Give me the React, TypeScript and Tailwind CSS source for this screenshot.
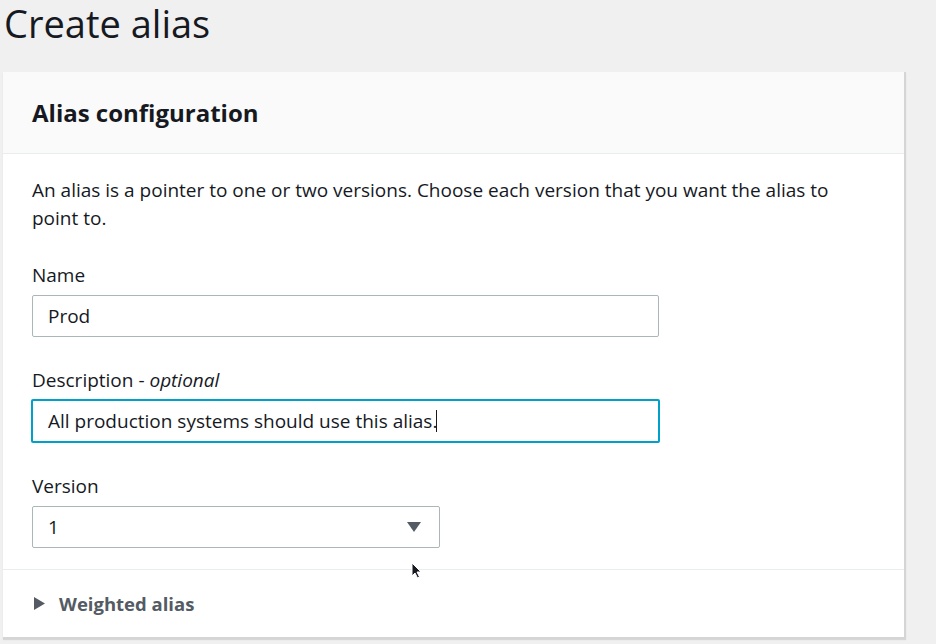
import React from 'react';

const font = { fontFamily: '"Open Sans", "Liberation Sans", sans-serif' };

const Field = ({ label, children }: { label: React.ReactNode; children: React.ReactNode }) => (
  <div className="flex flex-col">
    <label className="text-[19px] leading-[26px] text-[#16191f] mb-[7px]">{label}</label>
    {children}
  </div>
);

export default function App() {
  return (
    <div className="w-[936px] h-[644px] overflow-hidden bg-[#f0f0f0] text-[#16191f]" style={font}>
      <h1 className="pl-[4px] text-[38px] leading-[46px] font-normal text-[#16191f]">Create alias</h1>

      <div className="ml-[3px] mt-[26px] w-[903px] bg-white border-r-2 border-b-2 border-[#d5d5d5] shadow-[0_1px_1px_rgba(0,0,0,0.1)]">
        <div className="h-[82px] bg-[#fafafa] border-b border-[#eaeded] flex items-center px-[29px]">
          <h2 className="text-[24px] font-bold leading-[30px]">Alias configuration</h2>
        </div>

        <div className="px-[29px] pt-[22px] pb-[21px] flex flex-col gap-[30px]">
          <p className="text-[19px] leading-[28px] w-[815px]">
            An alias is a pointer to one or two versions. Choose each version that you want the alias to point to.
          </p>

          <Field label="Name">
            <div className="w-[627px] h-[42px] border border-[#aab7b8] rounded-[2px] flex items-center px-[15px] text-[19px]">
              Prod
            </div>
          </Field>

          <Field label={<>Description - <i>optional</i></>}>
            <div className="-ml-[1px] w-[629px] h-[44px] -mt-[1px] border-2 border-[#00a1c9] rounded-[2px] flex items-center px-[15px] text-[19px]">
              All production systems should use this alias.<span className="inline-block w-px h-[22px] bg-[#16191f] -ml-px" />
            </div>
          </Field>

          <Field label="Version">
            <div className="w-[408px] h-[42px] border border-[#aab7b8] rounded-[2px] flex items-center justify-between pl-[15px] pr-[17px] text-[19px]">
              <span>1</span>
              <svg width="16" height="12" viewBox="0 0 16 12">
                <path d="M1 1h14L8 11z" fill="#545b64" />
              </svg>
            </div>
          </Field>
        </div>

        <div className="relative border-t border-[#eaeded] h-[68px] flex items-center px-[30px] gap-[13px] text-[#545b64]">
          <svg width="13" height="15" viewBox="0 0 13 15">
            <path d="M1 1v13l11-6.5z" fill="#545b64" />
          </svg>
          <span className="text-[18.5px] font-bold">Weighted alias</span>
          <svg className="absolute left-[408px] -top-[8px]" width="12" height="18" viewBox="0 0 12 18">
            <path d="M1 1v13l3-3 2.5 5 2-1-2.5-5h4z" fill="#16191f" stroke="#fff" strokeWidth="1" />
          </svg>
        </div>
      </div>
    </div>
  );
}
